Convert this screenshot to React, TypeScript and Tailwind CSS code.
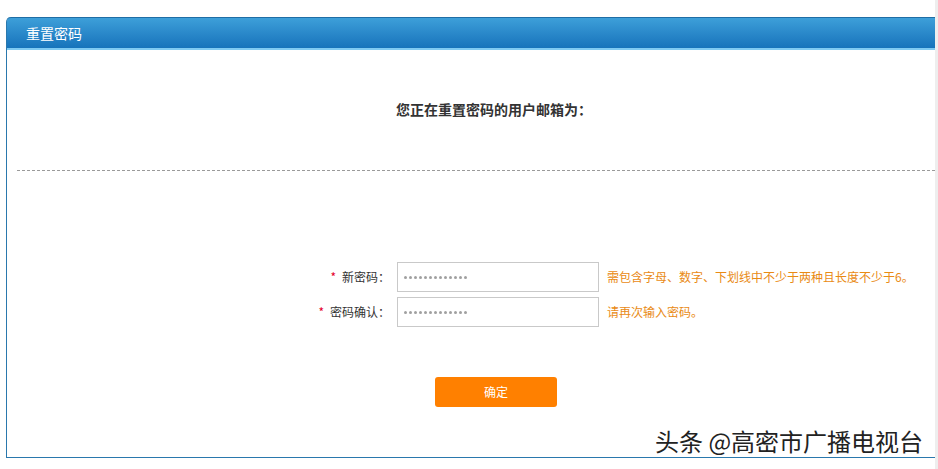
import React from "react";

const cjk = { fontFamily: '"Noto Sans CJK SC", "Noto Sans", sans-serif' };

function Dots() {
  return (
    <div className="ml-[7px] w-[202px] h-[30px] border border-[#c9c9c9] flex items-center pl-[6px] gap-[2px]">
      {Array.from({ length: 13 }).map((_, i) => (
        <span key={i} className="w-[3px] h-[3px] rounded-full bg-[#a0a0a0]" />
      ))}
    </div>
  );
}

export default function App() {
  return (
    <div className="relative w-[938px] h-[469px] bg-white overflow-hidden flex" style={cjk}>
      <div className="ml-[6px] mt-[17px] w-[929px] h-[441px] border-l border-b border-[#2a78ad] rounded-tl-[5px] flex flex-col">
        <div className="h-[33px] shrink-0 rounded-tl-[4px] border-t border-[#1f6ea5] bg-gradient-to-b from-[#3d9fd9] to-[#1673bb] border-b-2 border-b-[#7fcaf2] flex items-center pl-[19px]">
          <span className="text-white text-[14px] leading-none">重置密码</span>
        </div>
        <div className="pt-[46px] pl-[46px] text-center">
          <span className="text-[14px] font-bold text-[#333] leading-[18px]">您正在重置密码的用户邮箱为：</span>
        </div>
        <div className="mt-[50px] ml-[10px] border-t border-dashed border-[#9a9a9a]" />
        <div className="mt-[91px] flex flex-col gap-[5px]">
          <div className="flex items-center">
            <div className="w-[383px] text-right text-[12px] text-[#333] leading-none">
              <span className="text-[#e4002b] mr-[6px]">*</span>新密码：
            </div>
            <Dots />
            <div className="ml-[8px] text-[12px] text-[#e98a14] leading-none">需包含字母、数字、下划线中不少于两种且长度不少于6。</div>
          </div>
          <div className="flex items-center">
            <div className="w-[383px] text-right text-[12px] text-[#333] leading-none">
              <span className="text-[#e4002b] mr-[6px]">*</span>密码确认：
            </div>
            <Dots />
            <div className="ml-[8px] text-[12px] text-[#e98a14] leading-none">请再次输入密码。</div>
          </div>
        </div>
        <div className="mt-[50px] ml-[428px]">
          <button className="w-[122px] h-[30px] rounded-[3px] bg-[#ff8000] text-white text-[12px] flex items-center justify-center">确定</button>
        </div>
      </div>
      <div className="w-[3px] h-full bg-[#eeeeee]" />
      <div
        className="absolute left-[655px] top-[429px] text-[24px] text-[#222] leading-none"
        style={{ textShadow: "0 0 2px #fff, 0 0 2px #fff" }}
      >
        头条 @高密市广播电视台
      </div>
    </div>
  );
}
